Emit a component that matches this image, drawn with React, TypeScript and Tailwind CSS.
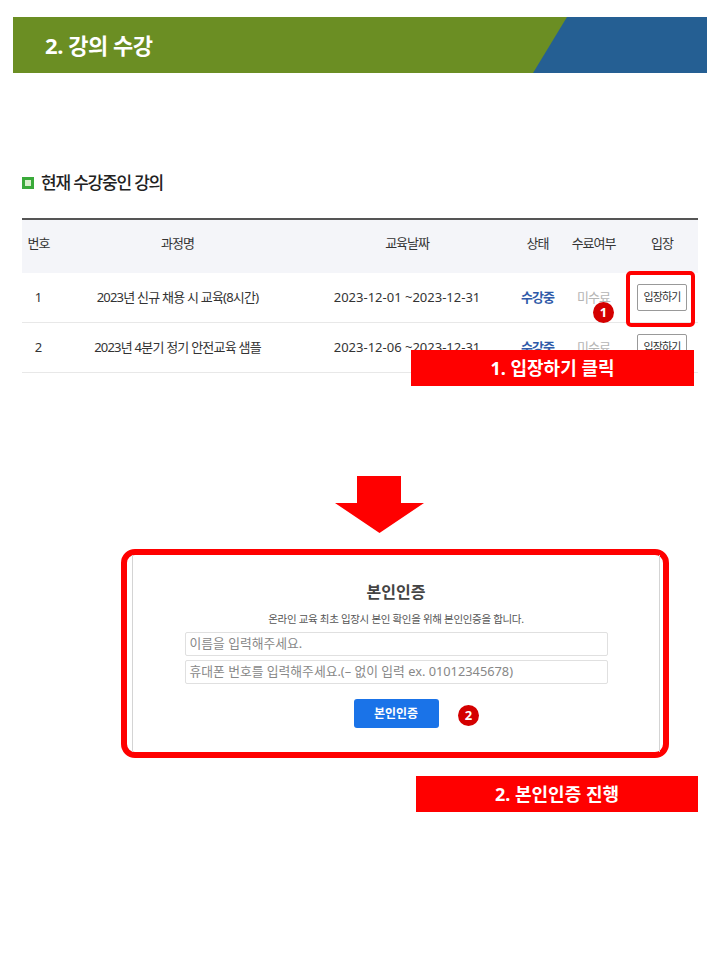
import React from "react";

type Course = {
    no: number;
    title: string;
    period: string;
};

const courses: Course[] = [
    { no: 1, title: "2023년 신규 채용 시 교육(8시간)", period: "2023-12-01 ~2023-12-31" },
    { no: 2, title: "2023년 4분기 정기 안전교육 샘플", period: "2023-12-06 ~2023-12-31" },
];

const cols = "grid grid-cols-[33px_245px_214px_47px_65px_72px]";

const Badge = ({ n, className }: { n: number; className: string }) => (
    <div className={`absolute w-[21px] h-[21px] rounded-full bg-[#d40000] text-white text-[13px] font-bold flex items-center justify-center leading-none ${className}`}>
        {n}
    </div>
);

const App: React.FC = () => {
    return (
        <div className="relative w-[720px] h-[960px] bg-white overflow-hidden font-['Noto_Sans','Noto_Sans_CJK_KR',sans-serif] text-[#333]">
            {/* slide header */}
            <div className="relative mt-[17px] ml-[13px] w-[694px] h-[56px] bg-[#6b8e23] flex items-center pl-[32px]">
                <svg className="absolute inset-0" width="694" height="56" viewBox="0 0 694 56" preserveAspectRatio="none">
                    <polygon points="554,0 694,0 694,56 520,56" fill="#255f93" />
                </svg>
                <h1 className="relative text-white text-[22px] font-bold tracking-[-0.02em]">2. 강의 수강</h1>
            </div>

            {/* section title */}
            <div className="mt-[98px] ml-[22px] h-[24px] flex items-center gap-[7px]">
                <span className="w-[12px] h-[12px] border-[3px] border-[#3aaa3a] bg-[#d8f0cc]" />
                <span className="text-[17px] font-medium tracking-[-0.07em] text-[#222]">현재 수강중인 강의</span>
            </div>

            {/* course table */}
            <div className="mt-[23px] ml-[22px] w-[676px] border-t-2 border-[#555] text-[13px]">
                <div className={`${cols} h-[53px] bg-[#f4f5f9] items-center pb-[6px] tracking-[-0.08em] text-[#333]`}>
                    <div className="text-center">번호</div>
                    <div className="text-center">과정명</div>
                    <div className="text-center">교육날짜</div>
                    <div className="text-center">상태</div>
                    <div className="text-center">수료여부</div>
                    <div className="text-center">입장</div>
                </div>
                {courses.map((c) => (
                    <div key={c.no} className={`${cols} h-[50px] items-center border-b border-[#e8e8e8]`}>
                        <div className="text-center">{c.no}</div>
                        <div className="text-center tracking-[-0.06em]">{c.title}</div>
                        <div className="text-center">{c.period}</div>
                        <div className="text-center font-bold text-[#2f5aa8] tracking-[-0.08em]">수강중</div>
                        <div className="text-center text-[#b5b5b5] tracking-[-0.08em]">미수료</div>
                        <div className="flex justify-center">
                            <button className="w-[50px] h-[27px] border border-[#999] rounded-[2px] bg-white text-[11px] tracking-[-0.08em] text-[#333]">
                                입장하기
                            </button>
                        </div>
                    </div>
                ))}
            </div>

            {/* step 1 annotations */}
            <div className="absolute left-[626px] top-[271px] w-[69px] h-[56px] border-4 border-[#ff0000] rounded-[5px]" />
            <Badge n={1} className="left-[593px] top-[302px]" />
            <div className="absolute left-[411px] top-[350px] w-[283px] h-[36px] bg-[#ff0000] flex items-center justify-center text-white text-[18px] font-bold">
                1. 입장하기 클릭
            </div>

            {/* down arrow */}
            <svg className="mt-[103px] ml-[335px] block" width="89" height="57" viewBox="0 0 89 57">
                <polygon points="22,0 66,0 66,27 89,27 44.5,57 0,27 22,27" fill="#ff0000" />
            </svg>

            {/* identity verification modal */}
            <div className="mt-[16px] ml-[121px] w-[548px] h-[209px] border-[6px] border-[#ff0000] rounded-[14px] bg-white">
                <div className="h-full ml-[5px] mr-[3px] border-x border-[#d4d4d4] flex flex-col items-center pt-[25px]">
                    <h2 className="text-[16px] leading-[24px] font-bold text-[#444]">본인인증</h2>
                    <p className="mt-[8px] text-[10.5px] leading-[14px] tracking-[-0.03em] text-[#555]">
                        온라인 교육 최초 입장시 본인 확인을 위해 본인인증을 합니다.
                    </p>
                    <div className="mt-[6px] w-[423px] h-[24px] border border-[#e0e0e0] rounded-[2px] flex items-center px-[4px] text-[12.8px] text-[#888]">
                        이름을 입력해주세요.
                    </div>
                    <div className="mt-[4px] w-[423px] h-[24px] border border-[#e0e0e0] rounded-[2px] flex items-center px-[4px] text-[12.8px] text-[#888]">
                        휴대폰 번호를 입력해주세요.(– 없이 입력 ex. 01012345678)
                    </div>
                    <button className="mt-[15px] w-[85px] h-[29px] rounded-[3px] bg-[#1a73e8] text-white text-[12px] font-bold">
                        본인인증
                    </button>
                </div>
            </div>
            <Badge n={2} className="left-[458px] top-[705px]" />

            {/* step 2 banner */}
            <div className="mt-[18px] ml-[416px] w-[282px] h-[36px] bg-[#ff0000] flex items-center justify-center text-white text-[18px] font-bold">
                2. 본인인증 진행
            </div>
        </div>
    );
};

export default App;
